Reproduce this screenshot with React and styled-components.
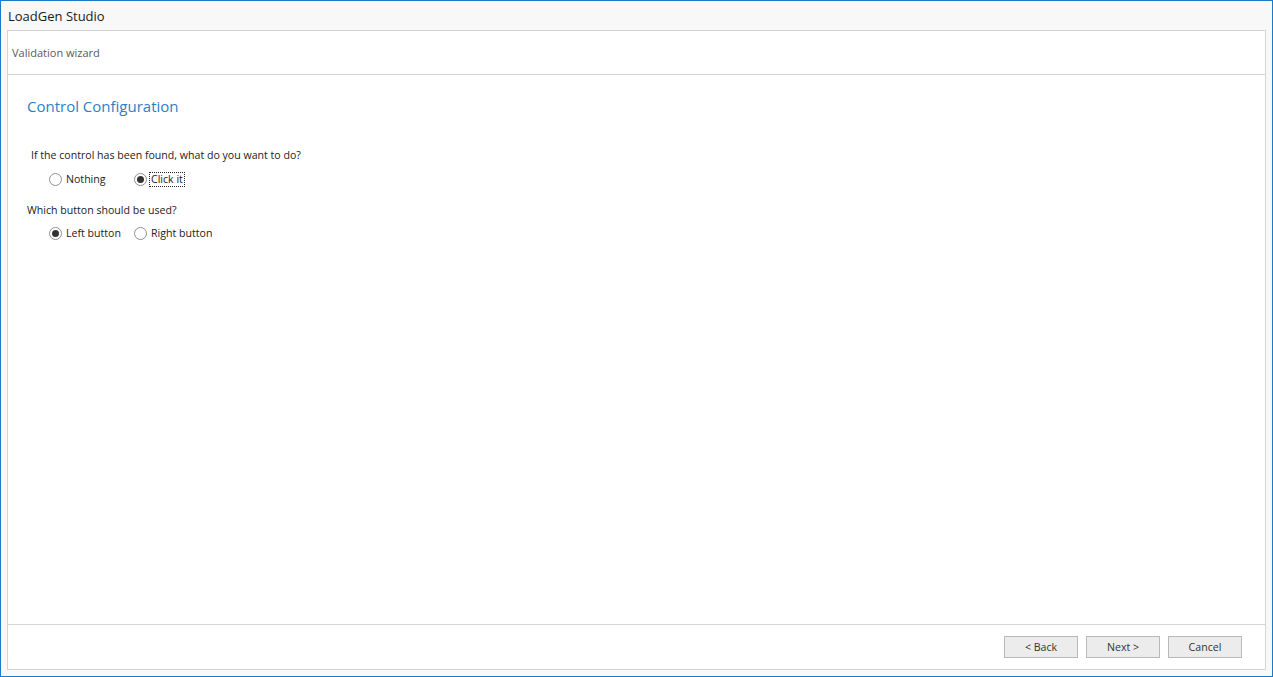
import React from 'react'
import styled, { createGlobalStyle } from 'styled-components'

const GlobalStyle = createGlobalStyle`
  html, body {
    margin: 0;
    padding: 0;
    background: #f8f8f8;
  }
  * {
    box-sizing: border-box;
  }
`

const Window = styled.div`
  width: 1273px;
  height: 677px;
  border: 1px solid #1979ca;
  background: #f8f8f8;
  display: flex;
  flex-direction: column;
  padding: 0 6px 6px 6px;
  font-family: 'Open Sans', 'Noto Sans', sans-serif;
`

const TitleBar = styled.div`
  height: 29px;
  display: flex;
  align-items: center;
  padding-left: 1px;
  font-size: 13px;
  color: #1a1a1a;
`

const Panel = styled.div`
  flex: 1;
  display: flex;
  flex-direction: column;
  background: #fff;
  border: 1px solid #d4d4d4;
`

const Header = styled.div`
  height: 44px;
  display: flex;
  align-items: center;
  padding-left: 4px;
  font-size: 11px;
  color: #5a5a5a;
  border-bottom: 1px solid #d4d4d4;
`

const Content = styled.div`
  flex: 1;
  padding: 21px 19px;
`

const Heading = styled.h2`
  margin: 0 0 32px 0;
  font-weight: 400;
  font-size: 15px;
  color: #2b7fc4;
`

const Question = styled.div`
  font-size: 10.6px;
  line-height: 15px;
  color: #222;
  margin: 0 0 ${({ after }) => after || 0}px ${({ indent }) => indent || 0}px;
`

const RadioRow = styled.div`
  display: flex;
  align-items: center;
  padding-left: 22px;
  margin-bottom: ${({ gap }) => gap || 0}px;
`

const RadioItem = styled.label`
  display: flex;
  align-items: center;
  width: 85px;
  font-size: 10.6px;
  color: #222;
  cursor: default;
`

const Circle = styled.span`
  width: 13px;
  height: 13px;
  border-radius: 50%;
  border: 1px solid #8f8f8f;
  background: #fff;
  display: flex;
  align-items: center;
  justify-content: center;
  margin-right: 3px;
  flex-shrink: 0;
  &::after {
    content: '';
    display: ${({ checked }) => (checked ? 'block' : 'none')};
    width: 7px;
    height: 7px;
    border-radius: 50%;
    background: #333;
  }
`

const RadioLabel = styled.span`
  padding: 0 1px;
  line-height: 13px;
  outline: ${({ focused }) => (focused ? '1px dotted #222' : 'none')};
`

const Footer = styled.div`
  height: 45px;
  border-top: 1px solid #d4d4d4;
  display: flex;
  justify-content: flex-end;
  align-items: flex-start;
  gap: 8px;
  padding: 11px 23px 0 0;
`

const Button = styled.button`
  width: 74px;
  height: 22px;
  border: 1px solid #b9b9b9;
  background: #ececec;
  font-family: 'Open Sans', 'Noto Sans', sans-serif;
  font-size: 10.6px;
  color: #333;
  padding: 0;
`

const Radio = ({ checked, focused, children }) => (
  <RadioItem>
    <Circle checked={checked} />
    <RadioLabel focused={focused}>{children}</RadioLabel>
  </RadioItem>
)

const App = () => (
  <>
    <GlobalStyle />
    <Window>
      <TitleBar>LoadGen Studio</TitleBar>
      <Panel>
        <Header>Validation wizard</Header>
        <Content>
          <Heading>Control Configuration</Heading>
          <Question indent={4} after={10}>If the control has been found, what do you want to do?</Question>
          <RadioRow gap={17}>
            <Radio>Nothing</Radio>
            <Radio checked focused>Click it</Radio>
          </RadioRow>
          <Question after={9}>Which button should be used?</Question>
          <RadioRow>
            <Radio checked>Left button</Radio>
            <Radio>Right button</Radio>
          </RadioRow>
        </Content>
        <Footer>
          <Button>&lt; Back</Button>
          <Button>Next &gt;</Button>
          <Button>Cancel</Button>
        </Footer>
      </Panel>
    </Window>
  </>
)

export default App
